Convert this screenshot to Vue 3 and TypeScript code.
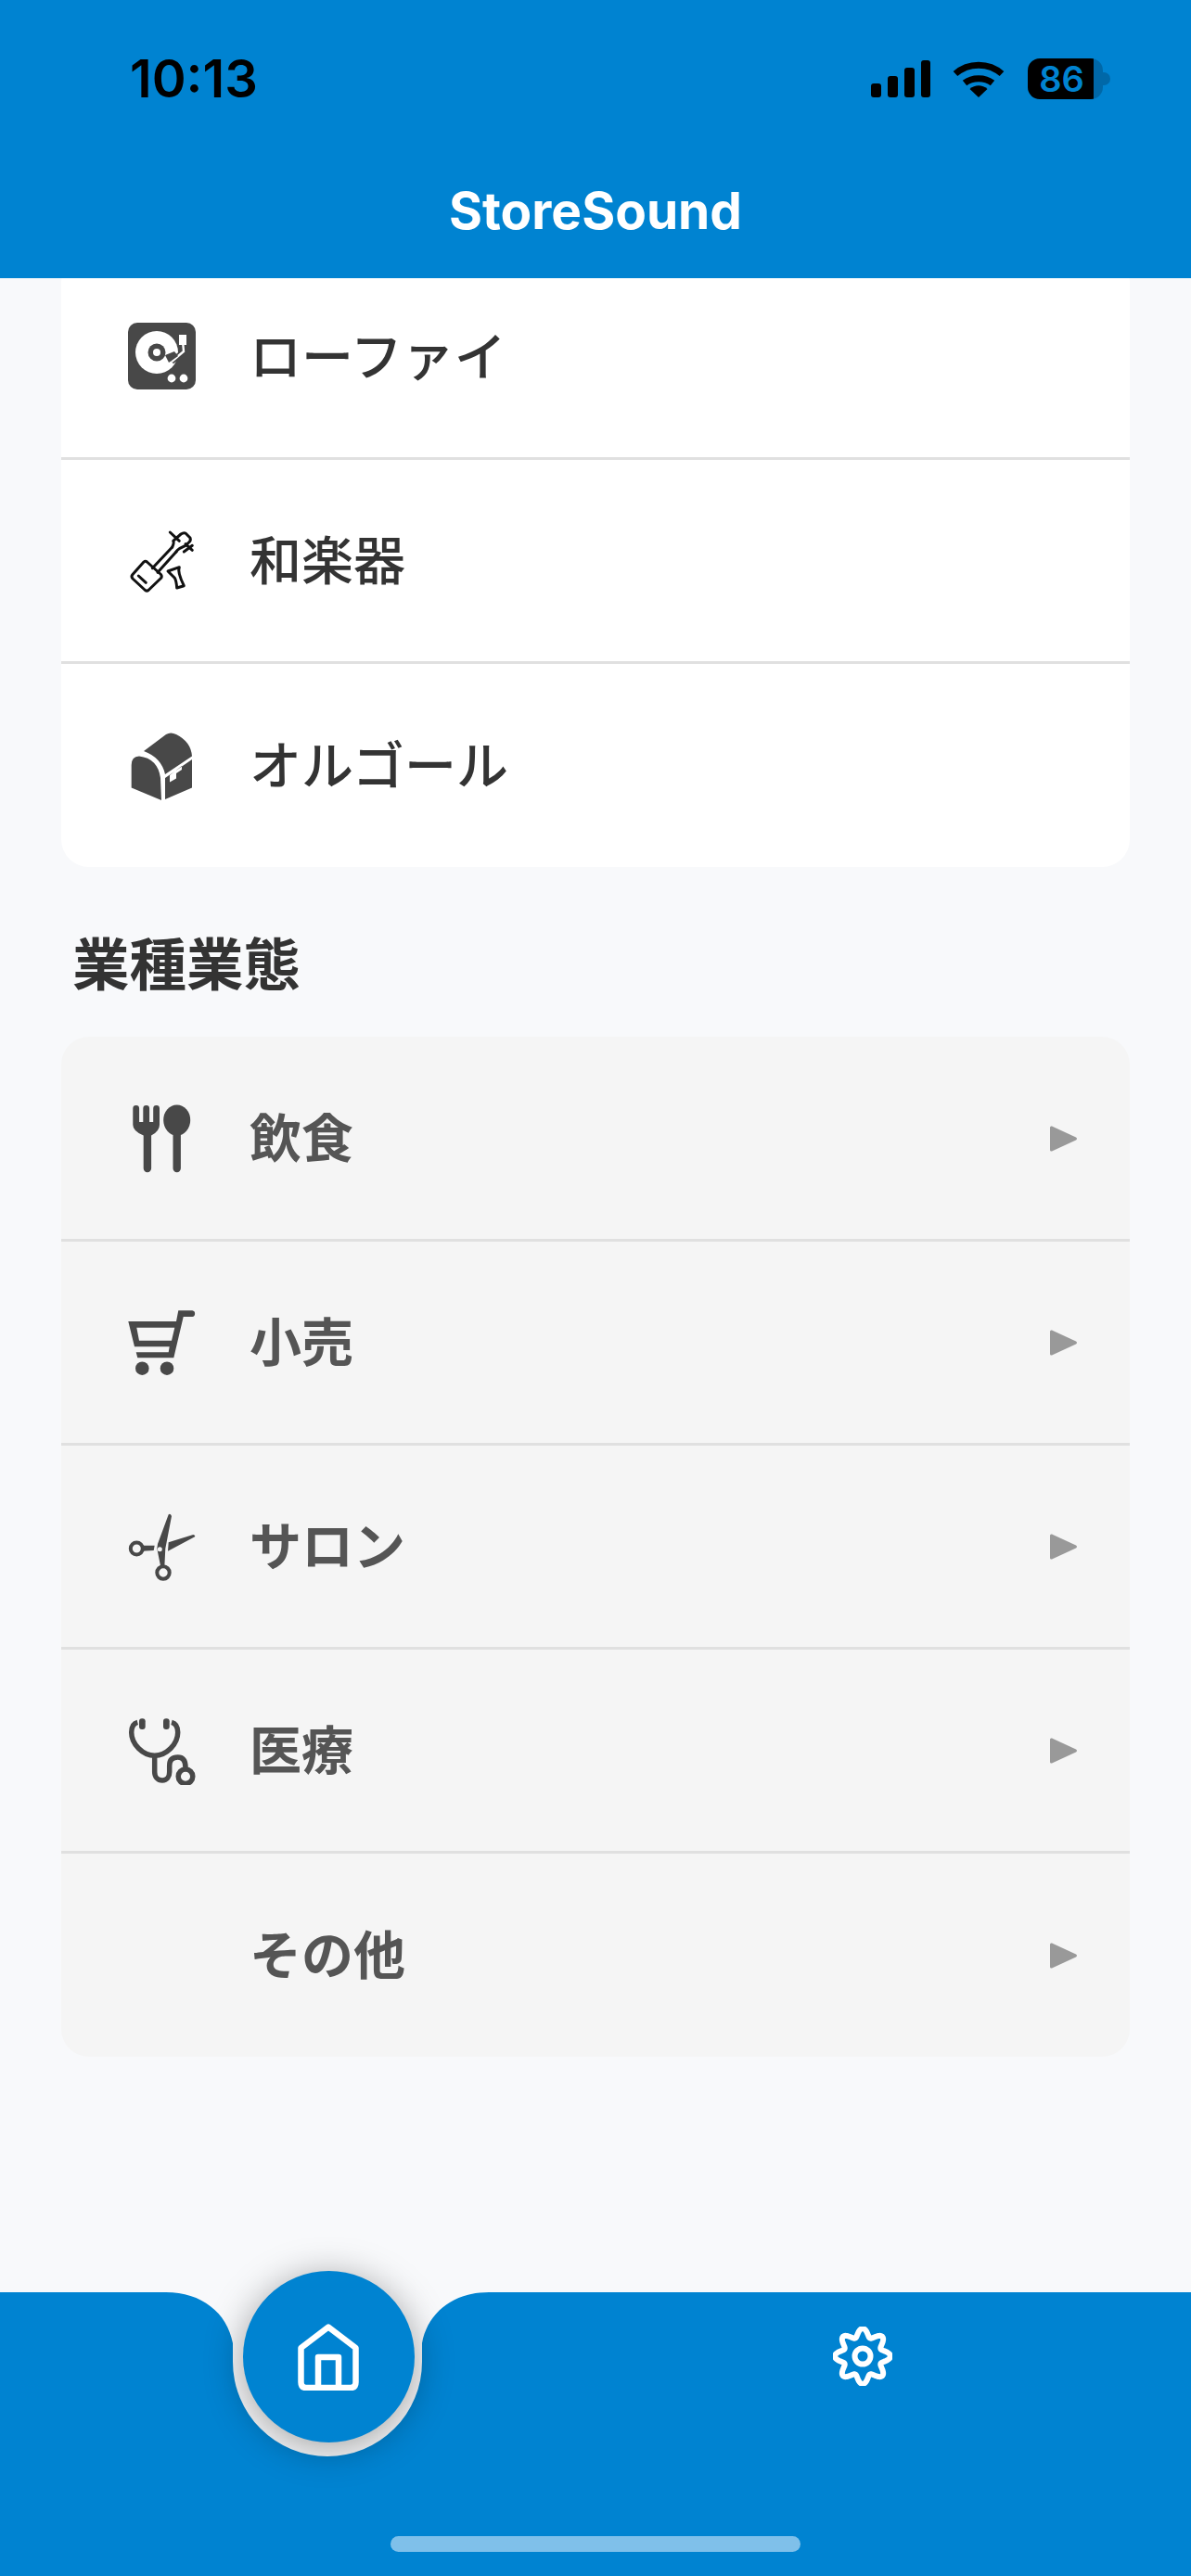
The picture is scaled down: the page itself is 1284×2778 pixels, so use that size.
<script setup lang="ts">
const genres = [
  { label: "ローファイ", icon: "turntable" },
  { label: "和楽器", icon: "shamisen" },
  { label: "オルゴール", icon: "chest" },
];
const businesses = [
  { label: "飲食", icon: "food" },
  { label: "小売", icon: "cart" },
  { label: "サロン", icon: "scissors" },
  { label: "医療", icon: "medical" },
  { label: "その他", icon: "" },
];

// 8 lobes, same as the settings icon in the tab bar
function gearPath(): string {
  const pts: string[] = [];
  for (let i = 0; i < 160; i++) {
    const a = (i / 160) * Math.PI * 2;
    const r = 25.5 + 4.5 * Math.cos(a * 8);
    pts.push(`${(32 + r * Math.sin(a)).toFixed(2)} ${(32 - r * Math.cos(a)).toFixed(2)}`);
  }
  return "M" + pts.join("L") + "Z";
}
const gear = gearPath();
</script>

<template>
  <div class="screen">
    <header class="app-header">
      <div class="status-bar">
        <span class="time">10:13</span>
        <div class="status-icons">
          <svg class="signal" width="64" height="40" viewBox="0 0 64 40" fill="#000">
            <rect x="0" y="25" width="11" height="15" rx="3" />
            <rect x="18" y="17" width="11" height="23" rx="3" />
            <rect x="36" y="8" width="11" height="32" rx="3" />
            <rect x="54" y="0" width="10" height="40" rx="3" />
          </svg>
          <svg class="wifi" width="56" height="40" viewBox="0 0 56 40" fill="none" stroke="#000" stroke-width="7">
            <path d="M3 14.5C17 2 39 2 53 14.5" />
            <path d="M13 24.5C21 18 35 18 43 24.5" />
            <path d="M18.5 31C24 26 32 26 37.5 31L28 40Z" fill="#000" stroke="none" />
          </svg>
          <div class="battery">
            <div class="battery-body">
              <span class="battery-level">86</span>
            </div>
            <span class="battery-cap"></span>
          </div>
        </div>
      </div>
      <h1 class="title">StoreSound</h1>
    </header>

    <main class="content">
      <div class="scroll">
        <section class="card">
          <div v-for="g in genres" :key="g.label" class="row">
            <span class="row-icon">
              <svg v-if="g.icon === 'turntable'" viewBox="0 0 74 74" width="74" height="74">
                <rect x="0" y="0" width="73" height="72" rx="10" fill="#484848" />
                <circle cx="31" cy="32" r="23" fill="#fff" />
                <circle cx="31" cy="32" r="9.5" fill="#484848" />
                <circle cx="31" cy="32" r="4" fill="#fff" />
                <path d="M59 20L60 31L47 42" fill="none" stroke="#484848" stroke-width="6" />
                <path d="M59 20L60 31L47 42" fill="none" stroke="#fff" stroke-width="2.4" />
                <rect x="55" y="13" width="8" height="11" fill="#fff" />
                <path d="M40 35L50 31L54 36L44 43Z" fill="#484848" />
                <circle cx="47" cy="60" r="4.4" fill="#fff" />
                <circle cx="60" cy="60" r="4.4" fill="#fff" />
              </svg>
              <svg v-else-if="g.icon === 'shamisen'" viewBox="0 0 74 74" width="74" height="74" fill="none" stroke="#111" stroke-width="3" stroke-linejoin="round" stroke-linecap="round">
                <path d="M5 51.500L17 38Q18.700 36.500 20.500 38L35.500 51.500Q37 53.700 35.500 55.500L22 68.500Q20.300 69.800 18.500 68.500L5 56Q3 53.700 5 51.500Z" />
                <path d="M11.300 53L19.300 60.300" />
                <path d="M26.300 44.700L47.700 22M32 49.300L52 27" />
                <path d="M47.700 22Q50 17 48.700 15.300L57 8Q60 6 62 7L67 12Q68 15 66 16.500L62 20.300L55.300 23.700Q53 25 52 27" />
                <path d="M45.300 6L55.300 15.300M62 18.700L69.300 25.300M60.300 27L69.300 20.300" />
                <path d="M43 48L55.300 43.700Q53 49 60.300 63.700L52.700 66Q52 58 50.300 55.300Z" />
              </svg>
              <svg v-else viewBox="0 0 74 74" width="74" height="74" fill="#484848">
                <path d="M3.700 36Q3.700 27 12 26.600Q32 29 35 50L36 74L3.700 60.600Z" />
                <path d="M17 21L41 3Q46 0 52 3Q68 11 69 26.600L40 46Q36 28 17 21Z" />
                <path d="M40 50L69 30V60.600L40 73ZM45 47V54.500L52 50.500V45L58 41V37Z" fill-rule="evenodd" />
              </svg>
            </span>
            <span class="row-label">{{ g.label }}</span>
          </div>
        </section>

        <h2 class="section-title">業種業態</h2>

        <section class="card card-disabled">
          <div v-for="b in businesses" :key="b.label" class="row">
            <span class="row-icon">
              <svg v-if="b.icon === 'food'" viewBox="0 0 74 74" width="74" height="74" fill="#484848">
                <path d="M5.300 4.500a3.400 3.400 0 0 1 6.800 0V19h4.200V4.500a3.400 3.400 0 0 1 6.800 0V19h4.100V4.500a3.400 3.400 0 0 1 6.800 0V22q0 7-8.900 11.500V69a4.200 4.200 0 0 1-8.400 0V33.500Q5.300 29 5.300 22Z" />
                <ellipse cx="52.700" cy="17" rx="14.500" ry="16.500" />
                <path d="M48.500 30h8.400V69a4.200 4.200 0 0 1-8.400 0Z" />
              </svg>
              <svg v-else-if="b.icon === 'cart'" viewBox="0 0 74 74" width="74" height="74" fill="#484848">
                <path fill-rule="evenodd" d="M.3 14H52L54.300 2.300H69.300A3.400 3.400 0 0 1 69.300 9H59.700L49.300 53.300H10.300L8.700 47.300H43.700L44.700 41.300H7ZM9.300 20.700L12 34.700H47L50.300 20.700Z" />
                <circle cx="15.300" cy="64.700" r="7.300" />
                <circle cx="42" cy="64.700" r="7.300" />
              </svg>
              <svg v-else-if="b.icon === 'scissors'" viewBox="0 0 74 74" width="74" height="74" fill="#484848">
                <circle cx="9.300" cy="39" r="6.500" fill="none" stroke="#484848" stroke-width="4" />
                <circle cx="38" cy="65" r="6.700" fill="none" stroke="#484848" stroke-width="4" />
                <path d="M15 35.700H28.700L27.700 41L15 41.700Z" />
                <path fill-rule="evenodd" d="M43.700 2.300Q45.500 .5 47 4L40.300 39L39.300 59H35.300L31.300 39L32 34ZM36.800 39.700a2.500 2.500 0 1 0-5 0a2.500 2.500 0 1 0 5 0Z" />
                <path d="M43.700 32.300L70.300 24Q73 25 72 26.300L43 41.700Z" />
              </svg>
              <svg v-else-if="b.icon === 'medical'" viewBox="0 0 74 74" width="74" height="74" fill="none" stroke="#484848" stroke-width="5.500">
                <path d="M10.300 6.300Q3.700 8 3.700 17.300C3.700 30 16 42.300 28.700 42.300S53.700 30 53.700 17.300Q53.700 8 47 6.300" />
                <path d="M28.700 42.300V60C28.700 65 32 69 37 69S44.700 65 44.700 60V53C44.700 47 48 44 53.700 44S62 48 62 55" />
                <circle cx="62" cy="64.700" r="7.800" />
                <rect x="12" y="2.300" width="6.700" height="11.700" rx="3" fill="#484848" stroke="none" />
                <rect x="38" y="2.300" width="6.700" height="11.700" rx="3" fill="#484848" stroke="none" />
              </svg>
            </span>
            <span class="row-label">{{ b.label }}</span>
            <svg class="chevron" width="30" height="30" viewBox="0 0 30 30">
              <path d="M2 1.500L28 13.500Q30 15 28 16.500L2 28.500Q0 29 0 27V3Q0 1 2 1.500Z" fill="#999" />
            </svg>
          </div>
        </section>
      </div>
    </main>

    <footer class="tab-bar">
      <svg class="notch" width="348" height="180" viewBox="0 0 348 180">
        <path d="M0 0C38 0 66 22 72 55V75A102 102 0 0 0 276 75V55C282 22 310 0 348 0Z" fill="#f8f9fb" />
      </svg>
      <div class="tab">
        <button class="home-btn">
          <svg width="66" height="72" viewBox="0 0 66 72" fill="none" stroke="#fff" stroke-width="6.500" stroke-linejoin="round">
            <path d="M33 3.500L3.500 26V63Q3.500 69 9 69H57Q62.500 69 62.500 63V26Z" />
            <path d="M22 69V36H44V69" />
          </svg>
        </button>
      </div>
      <div class="tab">
        <svg class="gear" width="64" height="64" viewBox="0 0 64 64" fill="none" stroke="#fff" stroke-width="6" stroke-linejoin="round">
          <path :d="gear" />
          <circle cx="32" cy="32" r="8.500" />
        </svg>
      </div>
      <span class="home-indicator"></span>
    </footer>
  </div>
</template>

<style>
body {
  margin: 0;
  background: #f8f9fb;
}
</style>

<style scoped>
.screen {
  display: flex;
  flex-direction: column;
  width: 1284px;
  height: 2778px;
  overflow: hidden;
  background: #f8f9fb;
  font-family: "Inter", "Noto Sans CJK JP", sans-serif;
}

.app-header {
  flex-shrink: 0;
  height: 300px;
  box-sizing: border-box;
  background: #0083d1;
  padding-top: 63px;
}

.status-bar {
  display: flex;
  align-items: center;
  justify-content: space-between;
  height: 44px;
  padding: 0 87px 0 140px;
}

.time {
  font-size: 56px;
  font-weight: 600;
  line-height: 44px;
  color: #000;
}

.status-icons {
  display: flex;
  align-items: center;
}

.signal {
  margin-right: 24px;
}

.wifi {
  margin-right: 25px;
}

.battery {
  display: flex;
  align-items: center;
}

.battery-body {
  display: flex;
  align-items: center;
  justify-content: center;
  width: 81px;
  height: 44px;
  box-sizing: border-box;
  padding-right: 8px;
  border-radius: 13px;
  background: linear-gradient(90deg, #000 88%, #0068a8 88%);
}

.battery-level {
  font-size: 38px;
  font-weight: 600;
  color: #0083d1;
  line-height: 1;
}

.battery-cap {
  width: 8px;
  height: 14px;
  border-radius: 0 8px 8px 0;
  background: #0068a8;
}

.title {
  margin: 87px 0 0;
  text-align: center;
  font-size: 55px;
  line-height: 66px;
  font-weight: 700;
  color: #fff;
}

.content {
  flex: 1;
  min-height: 0;
  overflow: hidden;
}

.scroll {
  margin-top: -25px;
  padding: 0 66px;
}

.card {
  padding-top: 1px;
  border-radius: 30px;
  background: #fff;
  overflow: hidden;
}

.card-disabled {
  background: #f5f5f5;
}

.row {
  display: flex;
  align-items: center;
  height: 220px;
  box-sizing: border-box;
  padding: 0 56px 0 72px;
  border-bottom: 3px solid #e0e0e0;
}

.row:last-child {
  height: 219px;
  border-bottom: none;
}

.row-icon {
  display: block;
  width: 74px;
  height: 74px;
  margin-right: 57px;
  flex-shrink: 0;
}

.row-icon svg {
  display: block;
}

.row-label {
  flex: 1;
  margin-bottom: 8px;
  font-size: 56px;
  font-weight: 500;
  color: #333;
}

.card-disabled .row-label {
  color: #555;
  font-weight: 700;
}

.chevron {
  flex-shrink: 0;
}

.section-title {
  margin: 0;
  padding: 65px 0 0 12px;
  height: 183px;
  box-sizing: border-box;
  font-size: 61.500px;
  line-height: 82px;
  font-weight: 700;
  color: #333;
}

.tab-bar {
  position: relative;
  flex-shrink: 0;
  display: grid;
  grid-template-columns: 1fr 1fr;
  height: 306px;
  box-sizing: border-box;
  padding: 0 66px;
  background: #0083d1;
}

.notch {
  position: absolute;
  left: 179px;
  top: 0;
}

.tab {
  position: relative;
  display: flex;
  justify-content: center;
  align-items: flex-start;
}

.home-btn {
  display: flex;
  align-items: center;
  justify-content: center;
  width: 185px;
  height: 185px;
  margin-top: -23px;
  padding: 0;
  border: none;
  border-radius: 50%;
  background: #0083d1;
  box-shadow: 0 6px 40px rgba(0, 0, 0, 0.36);
}

.gear {
  margin-top: 37px;
}

.home-indicator {
  position: absolute;
  left: 421px;
  top: 263px;
  width: 442px;
  height: 17px;
  border-radius: 9px;
  background: #7fc0ea;
}
</style>
